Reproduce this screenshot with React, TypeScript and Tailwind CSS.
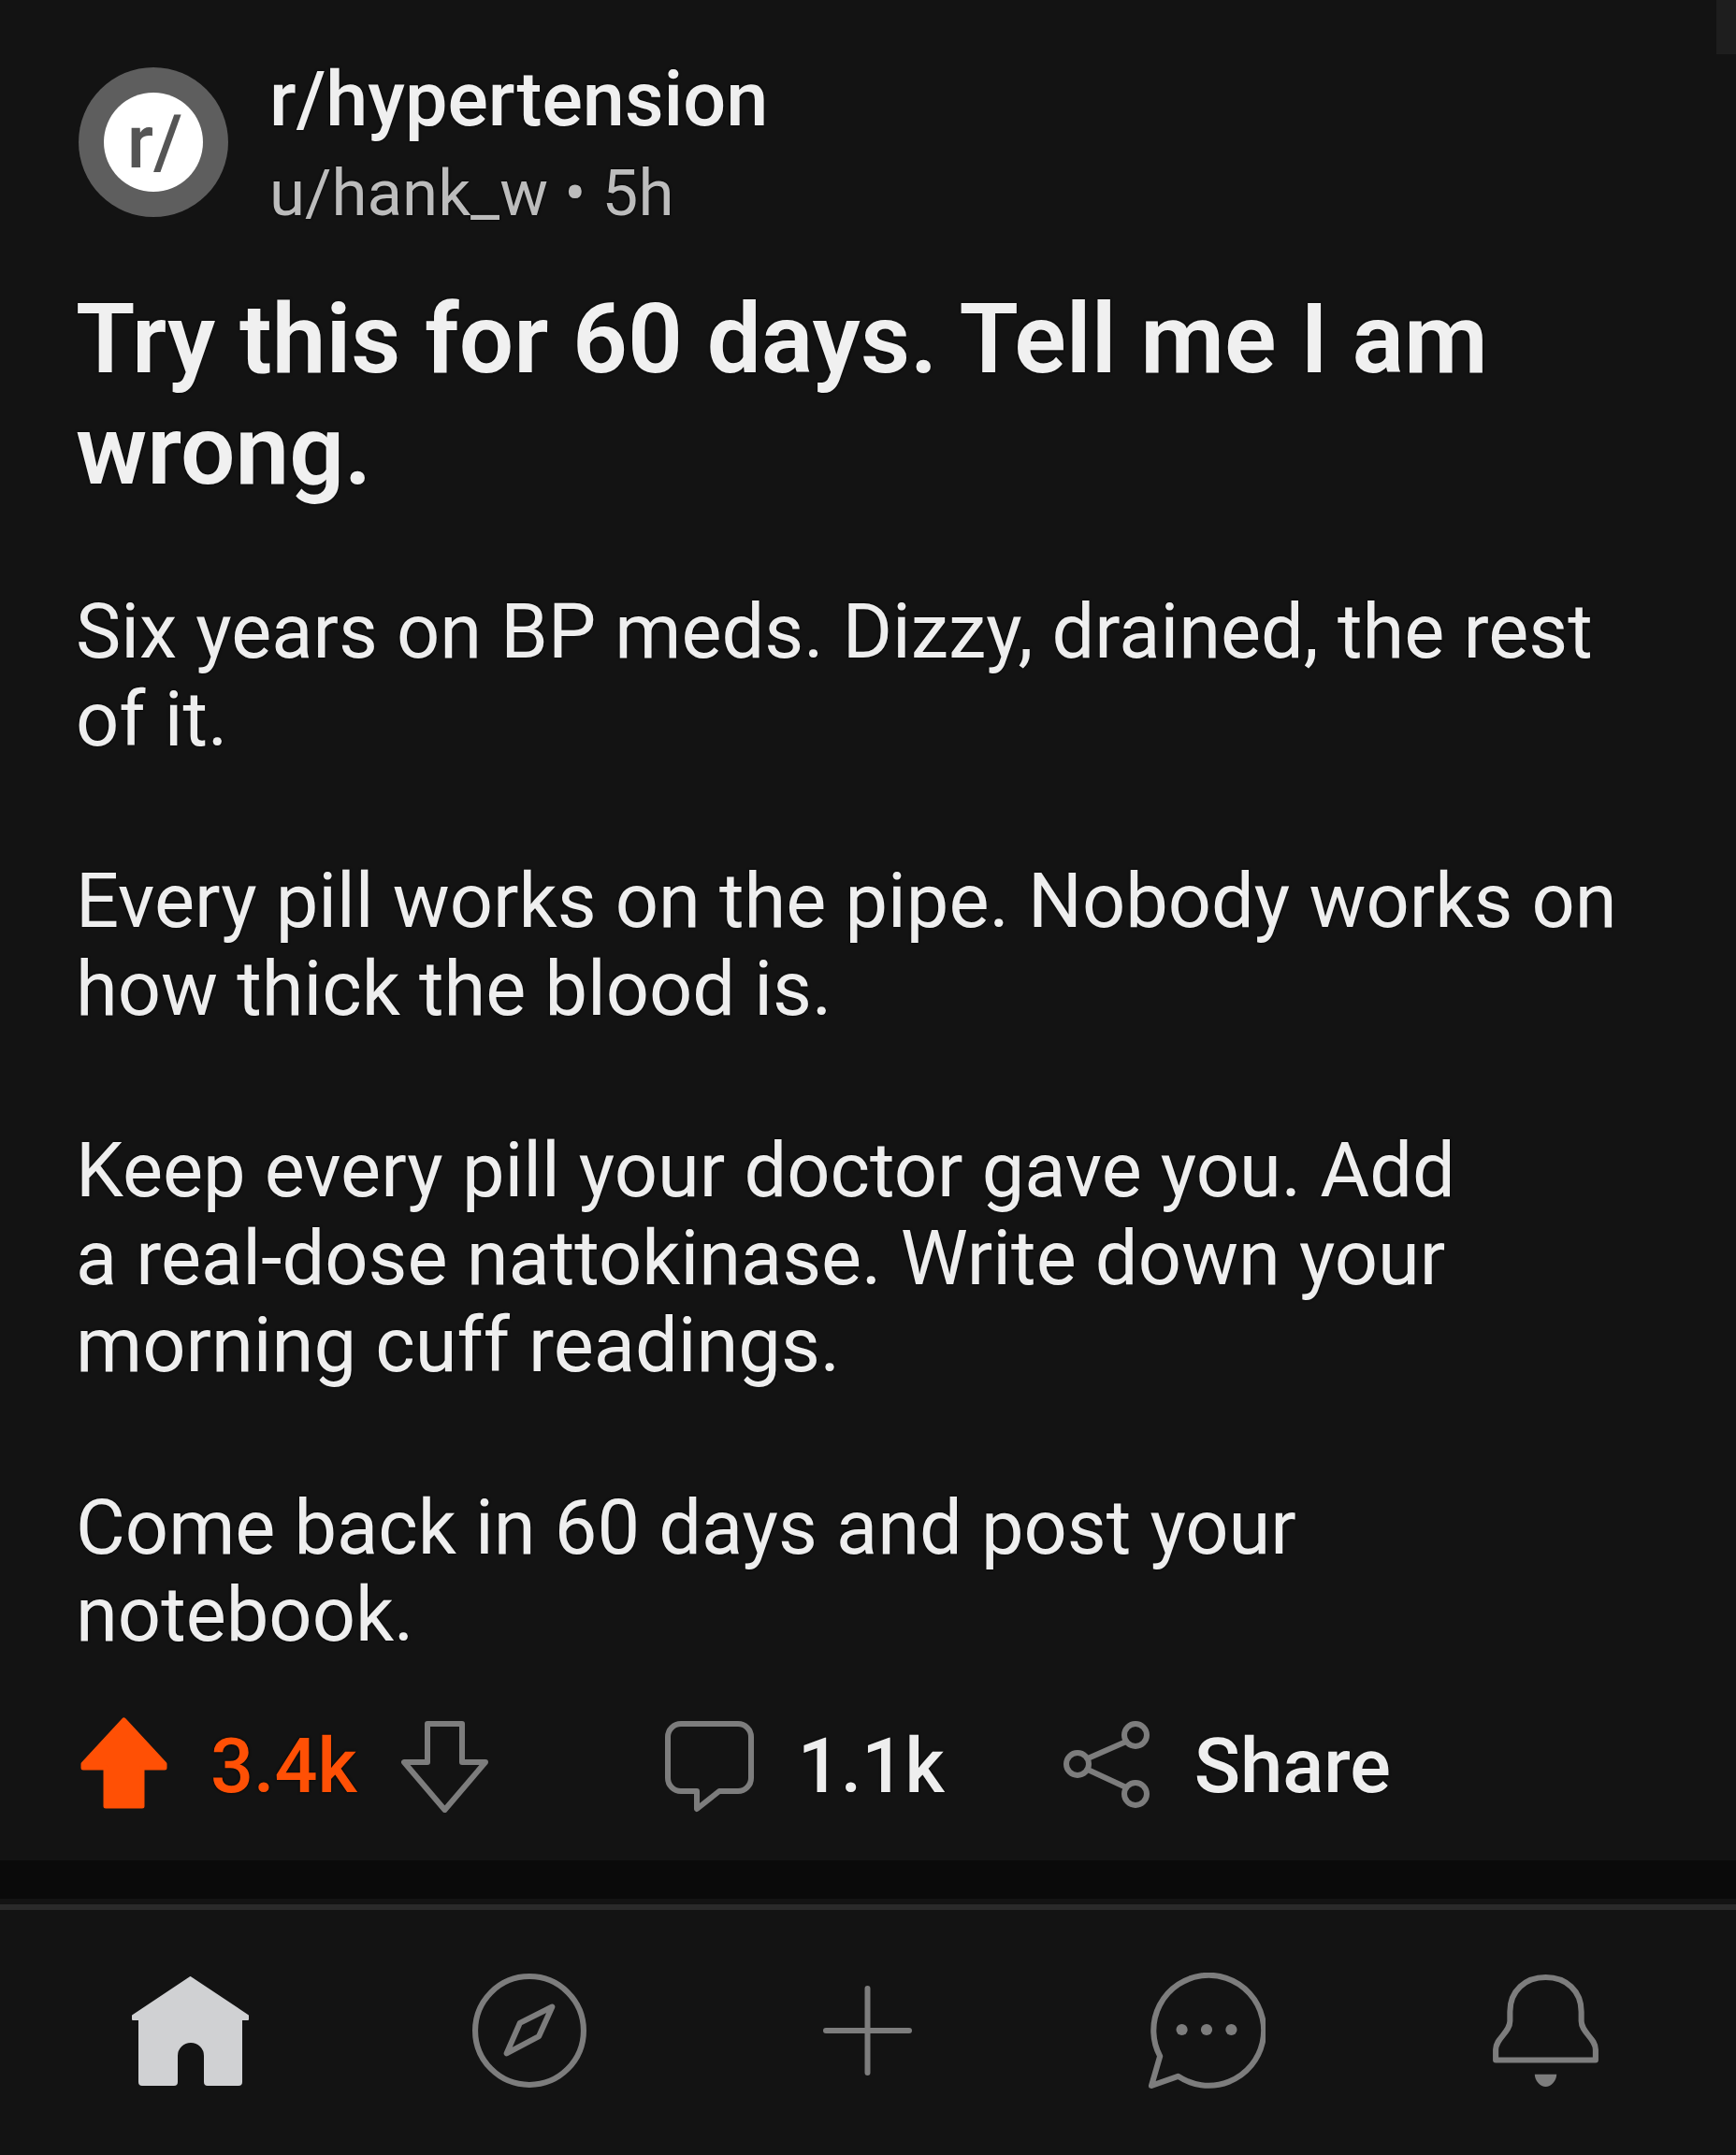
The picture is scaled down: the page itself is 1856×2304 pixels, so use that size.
const paragraphs = [
  ["Six years on BP meds. Dizzy, drained, the rest", "of it."],
  ["Every pill works on the pipe. Nobody works on", "how thick the blood is."],
  ["Keep every pill your doctor gave you. Add", "a real-dose nattokinase. Write down your", "morning cuff readings."],
  ["Come back in 60 days and post your", "notebook."],
];

function UpArrow() {
  return (
    <svg width="93" height="98" viewBox="0 0 93 98" className="block">
      <path d="M46.5 3 L90 50 V54 H66 V95 H27 V54 H3 V50 Z" fill="#ff5005" stroke="#ff5005" strokeWidth="5" strokeLinejoin="round" />
    </svg>
  );
}

function DownArrow() {
  return (
    <svg width="93" height="98" viewBox="0 0 93 98" fill="none" stroke="#7d7d7d" strokeWidth="6" strokeLinejoin="round" className="block">
      <path d="M28 3 H65 V44 H90 L46.5 95 L3 44 H28 Z" />
    </svg>
  );
}

function CommentIcon() {
  return (
    <svg width="95" height="98" viewBox="0 0 95 98" fill="none" stroke="#7d7d7d" strokeWidth="6" strokeLinejoin="round" className="block">
      <path d="M17 3 H78 a14 14 0 0 1 14 14 V61 a14 14 0 0 1 -14 14 H58 L34 94 V75 H17 a14 14 0 0 1 -14 -14 V17 a14 14 0 0 1 14 -14 Z" />
    </svg>
  );
}

function ShareIcon() {
  return (
    <svg width="93" height="93" viewBox="0 0 93 93" fill="none" stroke="#7d7d7d" strokeWidth="6" className="block">
      <circle cx="77" cy="15" r="12" />
      <circle cx="15" cy="46" r="12" />
      <circle cx="77" cy="78" r="12" />
      <path d="M26 40 L67 22 M26 52 L67 71" />
    </svg>
  );
}

function HomeIcon() {
  return (
    <svg width="127" height="118" viewBox="0 0 127 118" className="block">
      <path d="M63.5 2 L125 43 V47 H118 V114 a3 3 0 0 1 -3 3 H82 a3 3 0 0 1 -3 -3 V86 a15 15 0 0 0 -30 0 V114 a3 3 0 0 1 -3 3 H12 a3 3 0 0 1 -3 -3 V47 H2 V43 Z" fill="#d0d1d3" stroke="#d0d1d3" strokeWidth="2" strokeLinejoin="round" />
    </svg>
  );
}

function CompassIcon() {
  return (
    <svg width="124" height="124" viewBox="0 0 122 122" fill="none" stroke="#7d7d7d" strokeWidth="6" strokeLinejoin="round" className="block">
      <circle cx="61" cy="61" r="57" />
      <path d="M85 36 L71 67 L37 85 L51 53 Z" />
    </svg>
  );
}

function PlusIcon() {
  return (
    <svg width="95" height="96" viewBox="0 0 95 96" fill="none" stroke="#7d7d7d" strokeWidth="6" strokeLinecap="round" className="block">
      <path d="M3 48 H92 M47.5 3 V93" />
    </svg>
  );
}

function ChatIcon() {
  return (
    <svg width="125" height="124" viewBox="0 0 123 122" fill="none" stroke="#7d7d7d" strokeWidth="6" strokeLinejoin="round" className="block">
      <path d="M31 109 A58 58 0 1 0 12 88 L3 119 Z" />
      <circle cx="35" cy="60" r="6" fill="#7d7d7d" stroke="none" />
      <circle cx="61" cy="60" r="6" fill="#7d7d7d" stroke="none" />
      <circle cx="87" cy="60" r="6" fill="#7d7d7d" stroke="none" />
    </svg>
  );
}

function BellIcon() {
  return (
    <svg width="115" height="121" viewBox="0 0 113 119" fill="none" stroke="#7d7d7d" strokeWidth="6" strokeLinejoin="round" className="block">
      <path d="M4 91 H109 V80 C109 68 94 62 94 50 V40 C94 18 78 4 56.5 4 C35 4 19 18 19 40 V50 C19 62 4 68 4 80 Z" />
      <path d="M45 106 H68 C68 113 62 119 56.5 119 C51 119 45 113 45 106 Z" fill="#7d7d7d" stroke="none" />
    </svg>
  );
}

const navIcons = [HomeIcon, CompassIcon, PlusIcon, ChatIcon, BellIcon];

export default function App() {
  return (
    <div className="relative flex h-[2304px] w-[1856px] flex-col overflow-hidden bg-[#131313] font-['Roboto',sans-serif] text-[#eeeeee] [text-shadow:0_0_3px_#000]">
      {/* faint scroll thumb in the top corner */}
      <div className="absolute right-0 top-0 h-[58px] w-[21px] bg-[#1e1e1e]" />

      <main className="h-[1989px] px-[81px] pt-[57px]">
        <header className="flex items-start gap-[44px]">
          <div className="ml-[3px] mt-[15px] flex h-[160px] w-[160px] items-center justify-center rounded-full bg-[#5e5e5e]">
            <div className="flex h-[106px] w-[106px] items-center justify-center rounded-full bg-white pl-[3px] text-[80px] font-medium text-[#555555] [text-shadow:none]">
              r/
            </div>
          </div>
          <div>
            <div className="text-[81px] font-medium leading-[100px] text-[#efefef]">r/hypertension</div>
            <div className="text-[69px] leading-[100px] text-[#bcbcbc]">u/hank_w • 5h</div>
          </div>
        </header>

        <h1 className="mt-[46px] text-[103.3px] font-semibold leading-[119px] text-[#f0f0f0]">
          Try this for 60 days. Tell me I am
          <br />
          wrong.
        </h1>

        <div className="mt-[88px] flex flex-col gap-[101px] text-[81.2px] leading-[93.5px]">
          {paragraphs.map((lines) => (
            <p key={lines[0]}>
              {lines.map((line) => (
                <span key={line} className="block whitespace-nowrap">
                  {line}
                </span>
              ))}
            </p>
          ))}
        </div>

        <div className="mt-[62px] flex items-center">
          <div className="mb-[8px] ml-[5px]">
            <UpArrow />
          </div>
          <span className="ml-[46px] text-[81px] font-medium leading-none text-[#ff5005]">3.4k</span>
          <div className="ml-[47px]">
            <DownArrow />
          </div>
          <div className="ml-[189px]">
            <CommentIcon />
          </div>
          <span className="ml-[47px] text-[81px] font-medium leading-none">1.1k</span>
          <div className="mb-[4px] ml-[127px]">
            <ShareIcon />
          </div>
          <span className="ml-[47px] text-[81.5px] font-medium leading-none">Share</span>
        </div>
      </main>

      <div className="h-[41px] bg-[#0a0a0a]" />
      <div className="mt-[6px] h-[6px] bg-[#2a2a2a]" />
      <nav className="grid flex-1 grid-cols-5 items-center justify-items-center px-[22px] pb-[5px]">
        {navIcons.map((Icon, i) => (
          <Icon key={i} />
        ))}
      </nav>
    </div>
  );
}
